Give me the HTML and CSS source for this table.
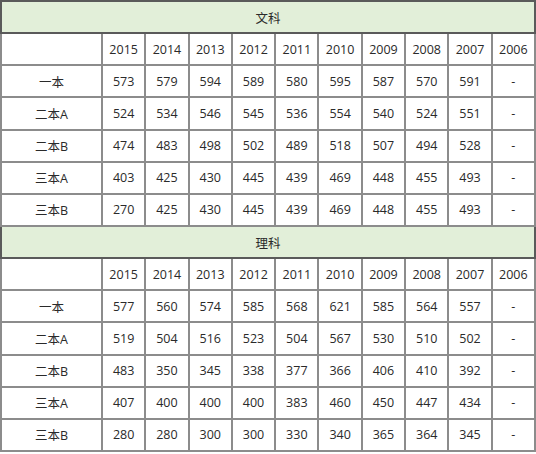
FILE: index.html
```html
<!DOCTYPE html>
<html lang="zh">
<head>
<meta charset="utf-8">
<link rel="stylesheet" href="styles.css">
</head>
<body>
<table class="scores">
  <colgroup>
    <col class="c-label">
    <col><col><col><col><col><col><col><col><col><col>
  </colgroup>
  <tbody>
    <tr class="section"><td colspan="11">文科</td></tr>
    <tr><td></td><td>2015</td><td>2014</td><td>2013</td><td>2012</td><td>2011</td><td>2010</td><td>2009</td><td>2008</td><td>2007</td><td>2006</td></tr>
    <tr><td>一本</td><td>573</td><td>579</td><td>594</td><td>589</td><td>580</td><td>595</td><td>587</td><td>570</td><td>591</td><td>-</td></tr>
    <tr><td>二本A</td><td>524</td><td>534</td><td>546</td><td>545</td><td>536</td><td>554</td><td>540</td><td>524</td><td>551</td><td>-</td></tr>
    <tr><td>二本B</td><td>474</td><td>483</td><td>498</td><td>502</td><td>489</td><td>518</td><td>507</td><td>494</td><td>528</td><td>-</td></tr>
    <tr><td>三本A</td><td>403</td><td>425</td><td>430</td><td>445</td><td>439</td><td>469</td><td>448</td><td>455</td><td>493</td><td>-</td></tr>
    <tr><td>三本B</td><td>270</td><td>425</td><td>430</td><td>445</td><td>439</td><td>469</td><td>448</td><td>455</td><td>493</td><td>-</td></tr>
    <tr class="section"><td colspan="11">理科</td></tr>
    <tr><td></td><td>2015</td><td>2014</td><td>2013</td><td>2012</td><td>2011</td><td>2010</td><td>2009</td><td>2008</td><td>2007</td><td>2006</td></tr>
    <tr><td>一本</td><td>577</td><td>560</td><td>574</td><td>585</td><td>568</td><td>621</td><td>585</td><td>564</td><td>557</td><td>-</td></tr>
    <tr><td>二本A</td><td>519</td><td>504</td><td>516</td><td>523</td><td>504</td><td>567</td><td>530</td><td>510</td><td>502</td><td>-</td></tr>
    <tr><td>二本B</td><td>483</td><td>350</td><td>345</td><td>338</td><td>377</td><td>366</td><td>406</td><td>410</td><td>392</td><td>-</td></tr>
    <tr><td>三本A</td><td>407</td><td>400</td><td>400</td><td>400</td><td>383</td><td>460</td><td>450</td><td>447</td><td>434</td><td>-</td></tr>
    <tr><td>三本B</td><td>280</td><td>280</td><td>300</td><td>300</td><td>330</td><td>340</td><td>365</td><td>364</td><td>345</td><td>-</td></tr>
  </tbody>
</table>
</body>
</html>
```
FILE: styles.css
```css
html, body {
  margin: 0;
  padding: 0;
  background: #ffffff;
}
.scores {
  border-collapse: collapse;
  table-layout: fixed;
  width: 536px;
  border: 2px solid #5a5a5a;
  font-family: "Open Sans", "Noto Sans CJK SC", sans-serif;
  font-size: 12.5px;
  color: #2a2a2a;
}
.c-label {
  width: 101px;
}
.scores td {
  border: 2px solid #8c8c8c;
  height: 30.15px;
  padding: 0;
  text-align: center;
  vertical-align: middle;
  white-space: nowrap;
}
.scores .section td {
  background: #e2efd9;
  border: 2px solid #5a5a5a;
}
```
